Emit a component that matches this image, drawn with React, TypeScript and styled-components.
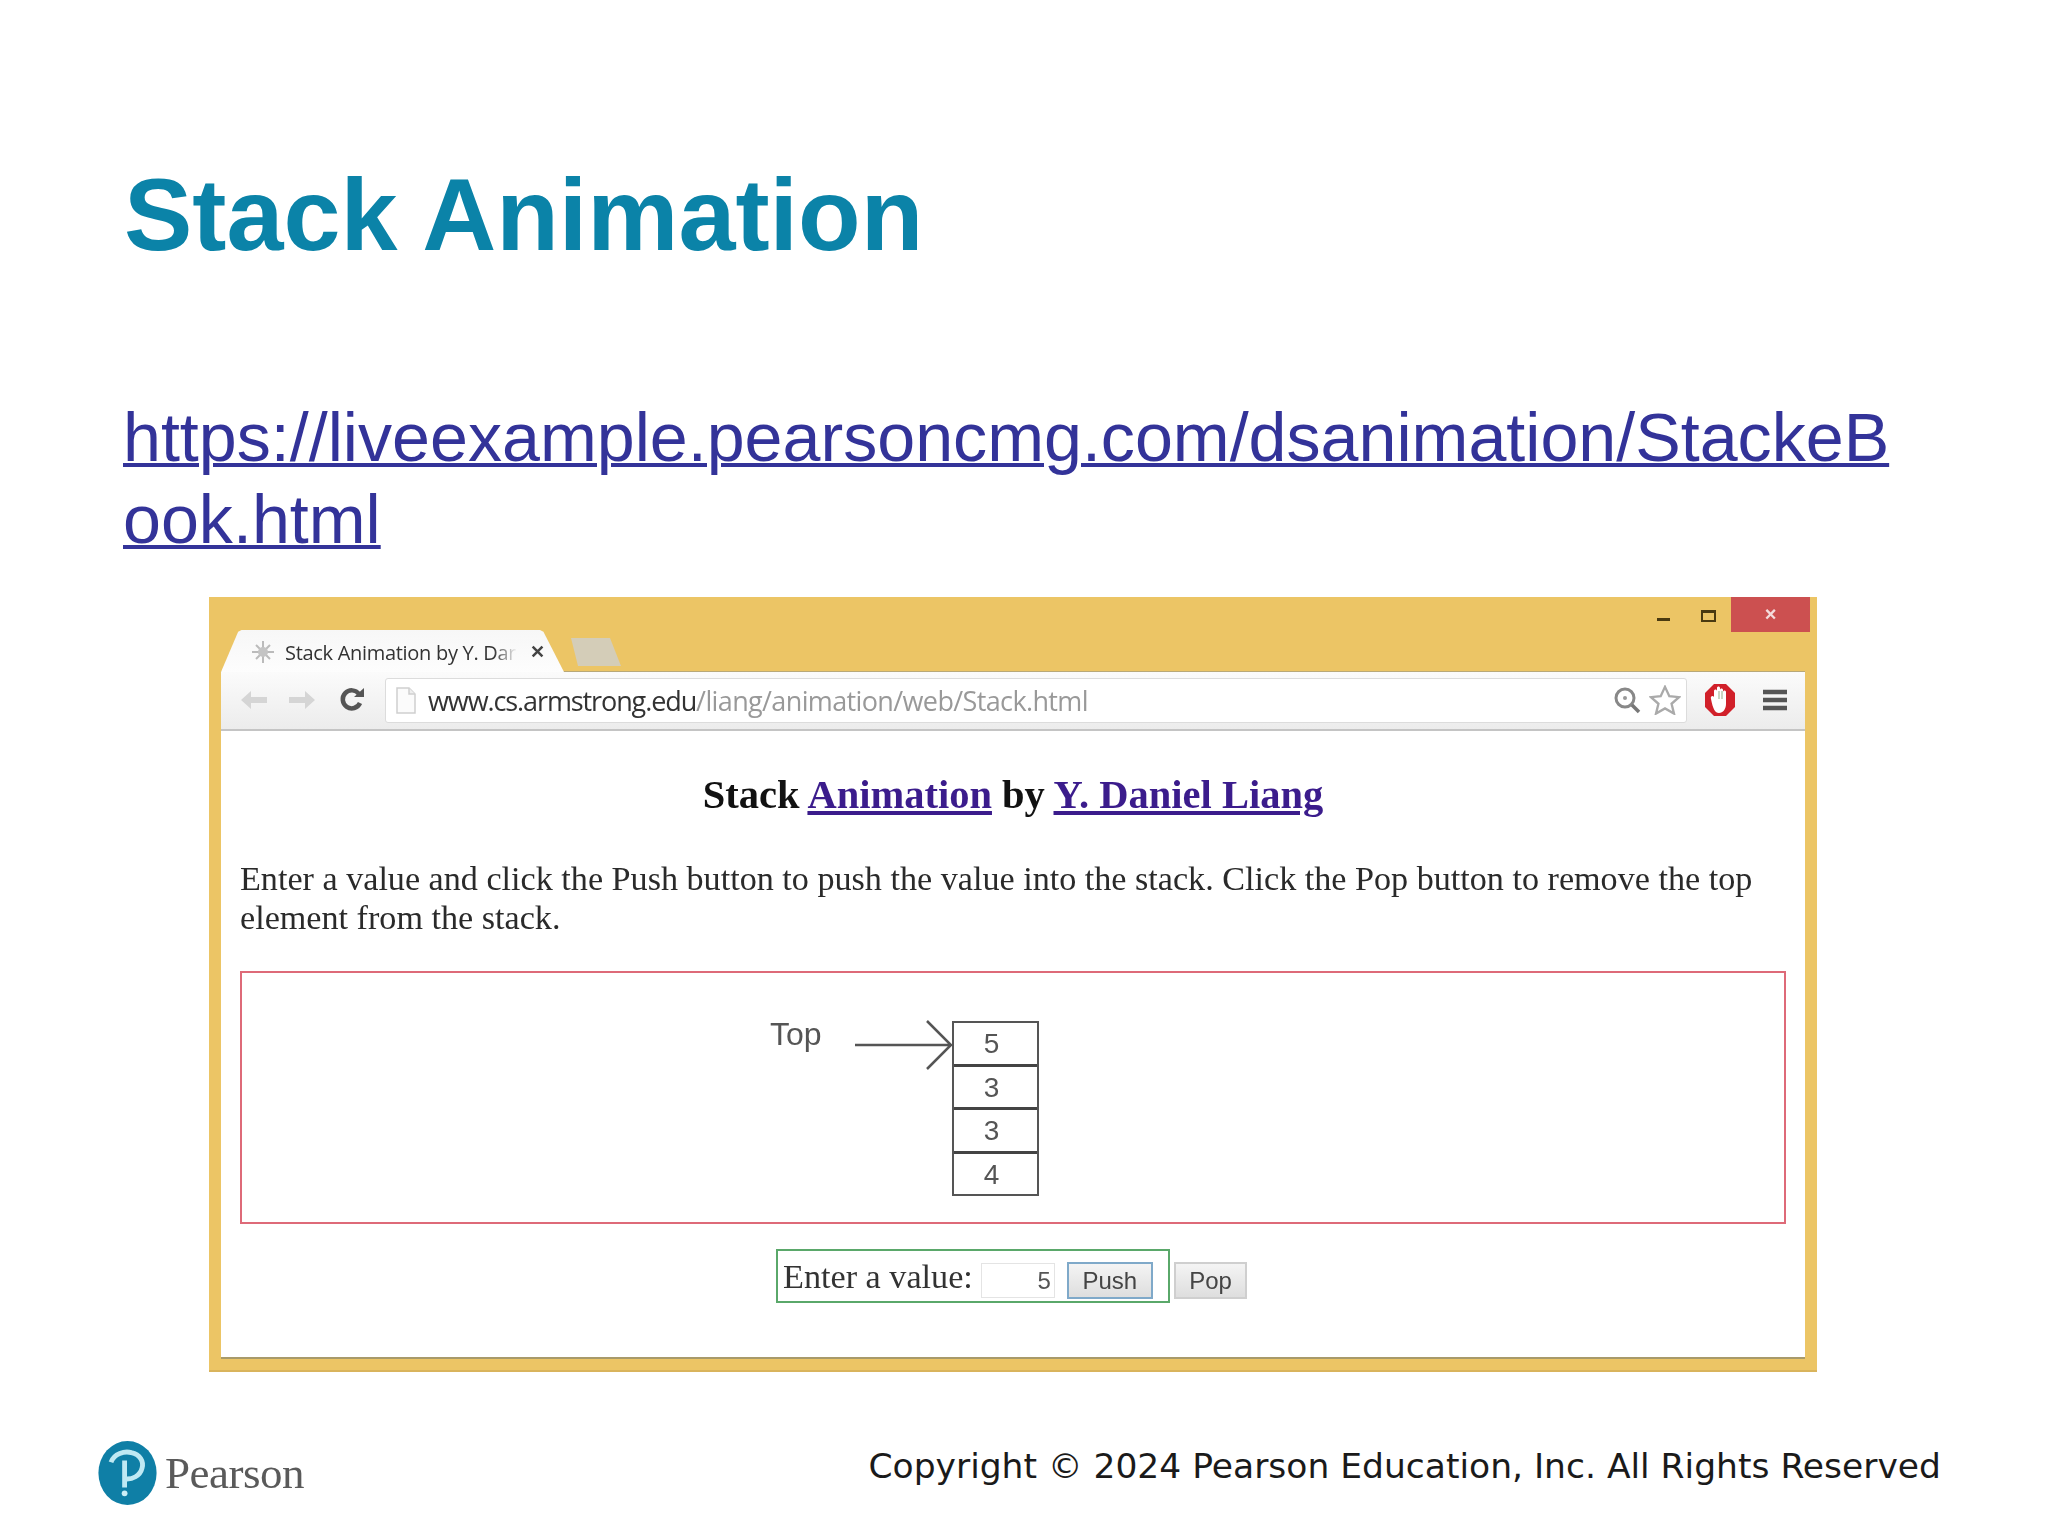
import * as React from 'react';
import styled, { createGlobalStyle } from 'styled-components';

const GlobalStyle = createGlobalStyle`
  html, body {
    margin: 0;
    padding: 0;
    background: #fff;
  }
`;

const Slide = styled.div`
  width: 2048px;
  height: 1536px;
  box-sizing: border-box;
  padding: 157px 0 0;
  background: #fff;
  display: flex;
  flex-direction: column;
  overflow: hidden;
`;

const Title = styled.h1`
  margin: 0 0 0 124px;
  font: bold 102.5px/115px 'Liberation Sans', Arial, sans-serif;
  color: #0b83a8;
  filter: blur(0.4px);
`;

const Link = styled.a`
  display: block;
  margin: 124px 0 0 123px;
  width: 1780px;
  font: 68.2px/82px 'Liberation Sans', Arial, sans-serif;
  color: #333399;
  text-decoration: underline;
  text-decoration-thickness: 4px;
  word-break: break-all;
  filter: blur(0.4px);
`;

const Shot = styled.div`
  margin: 37px 0 0 209px;
  width: 1608px;
  height: 775px;
  box-sizing: border-box;
  padding: 0 12px 13px;
  background: #ecc565;
  display: flex;
  flex-direction: column;
  filter: blur(0.7px);
  box-shadow: inset 0 -2px 0 #d9b45c;
`;

const Caption = styled.div`
  height: 33px;
  flex: none;
  display: flex;
  align-items: flex-start;
  justify-content: flex-end;
`;

const MinButton = styled.div`
  width: 13px;
  height: 3px;
  margin: 21px 31px 0 0;
  background: #4a3a10;
`;

const MaxButton = styled.div`
  width: 11px;
  height: 7px;
  margin: 13px 15px 0 0;
  border: 2px solid #4a3a10;
  border-top-width: 3px;
  box-sizing: content-box;
`;

const CloseButton = styled.div`
  width: 79px;
  height: 35px;
  margin-right: -5px;
  background: #cc5050;
  color: #f4dcdc;
  font: bold 20px/35px 'Liberation Sans', sans-serif;
  text-align: center;
`;

const TabStrip = styled.div`
  height: 41px;
  flex: none;
  display: flex;
  align-items: flex-end;
  gap: 7px;
`;

const Tab = styled.div`
  width: 343px;
  height: 42px;
  flex: none;
  margin-bottom: -1px;
  position: relative;
  box-sizing: border-box;
  padding: 2px 0 0 30px;
  background: linear-gradient(#f7f7f7, #fdfdfd);
  clip-path: polygon(0 100%, 5% 4%, 6% 0, 93% 0, 94% 4%, 100% 100%);
  display: flex;
  align-items: center;
  font: 20px 'Open Sans', 'Liberation Sans', sans-serif;
  letter-spacing: -0.3px;
  color: #333;
`;

const TabTitle = styled.span`
  width: 232px;
  margin-left: 10px;
  white-space: nowrap;
  -webkit-mask-image: linear-gradient(90deg, #000 90%, transparent);
  mask-image: linear-gradient(90deg, #000 90%, transparent);
`;

const TabClose = styled.span`
  margin-left: 13px;
  font: bold 18px 'Liberation Sans', sans-serif;
  color: #444;
`;

const NewTab = styled.div`
  width: 50px;
  height: 28px;
  margin-bottom: 5px;
  background: #d4cdb8;
  clip-path: polygon(14% 100%, 0 0, 78% 0, 100% 100%);
`;

const Toolbar = styled.div`
  height: 60px;
  flex: none;
  box-sizing: border-box;
  padding: 5px 10px 6px 18px;
  background: linear-gradient(#fbfbfb, #ececec);
  border-top: 1px solid #b8a878;
  border-bottom: 2px solid #c4c4c4;
  display: flex;
  align-items: center;
`;

const NavIcons = styled.div`
  width: 146px;
  flex: none;
  display: flex;
  align-items: center;
  gap: 18px;

  svg:last-child {
    margin-left: 3px;
  }
`;

const AddressBar = styled.div`
  flex: 1;
  height: 45px;
  box-sizing: border-box;
  padding: 0 5px 0 10px;
  background: #fff;
  border: 1px solid #dcdcdc;
  border-radius: 3px;
  display: flex;
  align-items: center;
  font: 27px 'Open Sans', 'Liberation Sans', sans-serif;
  letter-spacing: -0.63px;
  color: #999;
`;

const Host = styled.span`
  color: #333;
  margin-left: 12px;
  letter-spacing: -1.1px;
`;

const AddressIcons = styled.div`
  margin-left: auto;
  display: flex;
  align-items: center;
  gap: 7px;
`;

const ToolIcons = styled.div`
  width: 108px;
  flex: none;
  box-sizing: border-box;
  padding-left: 17px;
  display: flex;
  align-items: center;
  gap: 26px;
`;

const Page = styled.div`
  flex: 1;
  box-sizing: border-box;
  padding: 42px 19px 0;
  background: #fff;
  border-bottom: 2px solid #a89a6a;
  display: flex;
  flex-direction: column;
  font-family: 'Liberation Serif', 'Times New Roman', serif;
`;

const PageHeading = styled.h3`
  margin: 0;
  font: bold 40.5px/44px 'Liberation Serif', 'Times New Roman', serif;
  color: #111;
  text-align: center;
`;

const PageLink = styled.span`
  color: #3b1c8c;
  text-decoration: underline;
`;

const Blurb = styled.p`
  margin: 42px 0 0;
  width: 1540px;
  font-size: 34.15px;
  line-height: 39px;
  color: #2a2a2a;
`;

const AnimationPane = styled.div`
  margin-top: 34px;
  height: 253px;
  box-sizing: border-box;
  border: 2px solid #de6a78;
  padding: 48px 0 0 528px;
  display: flex;
  align-items: flex-start;
`;

const TopLabel = styled.div`
  width: 84px;
  margin-top: -5px;
  font: 32px 'Liberation Sans', Arial, sans-serif;
  color: #555;
`;

const TopArrow = styled.svg`
  flex: none;
  margin-top: -1px;
`;

const StackColumn = styled.div`
  width: 87px;
  box-sizing: border-box;
  border: 2.5px solid #555;
  display: flex;
  flex-direction: column;
`;

const StackCell = styled.div<{ $first?: boolean }>`
  height: 40.5px;
  border-top: ${p => (p.$first ? 'none' : '3px solid #444')};
  font: 28px/41px 'Liberation Sans', Arial, sans-serif;
  color: #555;
  text-align: center;
  padding-right: 8px;
`;

const Controls = styled.div`
  margin: 25px 0 0 536px;
  display: flex;
  align-items: center;
`;

const Fieldset = styled.div`
  width: 394px;
  height: 54px;
  box-sizing: border-box;
  border: 2px solid #5aa86a;
  padding: 2px 0 0 5px;
  display: flex;
  align-items: center;
  font-size: 34.2px;
  color: #333;
  white-space: nowrap;
`;

const ValueInput = styled.div`
  width: 74px;
  height: 35px;
  margin: 6px 0 0 8px;
  box-sizing: border-box;
  border: 1px solid #e4e4e4;
  padding-right: 3px;
  font: 24px/33px 'Liberation Sans', Arial, sans-serif;
  color: #555;
  text-align: right;
`;

const FormButton = styled.div<{ $width: number; $focused?: boolean; $gap: number; $drop: number }>`
  width: ${p => p.$width}px;
  height: 37px;
  flex: none;
  margin: ${p => p.$drop}px 0 0 ${p => p.$gap}px;
  box-sizing: border-box;
  border: 2px solid ${p => (p.$focused ? '#7fa9c9' : '#cfcfcf')};
  background: linear-gradient(#f4f4f4, #dedede);
  font: 24px/33px 'Liberation Sans', Arial, sans-serif;
  color: #444;
  text-align: center;
`;

const Footer = styled.div`
  margin-top: 69px;
  padding: 0 107px 0 98px;
  display: flex;
  align-items: center;
  justify-content: space-between;
`;

const Brand = styled.div`
  display: flex;
  align-items: center;
  gap: 8px;
  font: 45px 'Liberation Serif', 'Times New Roman', serif;
  letter-spacing: -0.5px;
  color: #5a5a5a;
  filter: blur(0.6px);
`;

const Copyright = styled.div`
  margin-top: -15px;
  font: 34.5px 'DejaVu Sans', Verdana, sans-serif;
  color: #1a1a1a;
`;

const FlippedSvg = styled.svg<{ $flip?: boolean }>`
  transform: ${p => (p.$flip ? 'scaleX(-1)' : 'none')};
`;

const BackArrow = ({ flip }: { flip?: boolean }) => (
  <FlippedSvg width="30" height="24" viewBox="0 0 30 24" $flip={flip}>
    <path d="M2 12 12 3v6h16v6H12v6z" fill="#d5d5d5" />
  </FlippedSvg>
);

const Reload = () => (
  <svg width="28" height="28" viewBox="0 0 28 28">
    <path d="M22 17a9 9 0 1 1-1-9" fill="none" stroke="#555" strokeWidth="4.5" />
    <path d="M16 11h10V2z" fill="#555" />
  </svg>
);

const PageIcon = () => (
  <svg width="20" height="27" viewBox="0 0 20 27">
    <path d="M1 1h12l6 6v19H1z" fill="#fbfbfb" stroke="#cfcfcf" strokeWidth="1.5" />
    <path d="M13 1v6h6" fill="#eee" stroke="#cfcfcf" strokeWidth="1.5" />
  </svg>
);

const Zoom = () => (
  <svg width="30" height="30" viewBox="0 0 30 30">
    <circle cx="13" cy="13" r="9" fill="none" stroke="#888" strokeWidth="3" />
    <circle cx="13" cy="13" r="2" fill="#999" />
    <path d="m20 20 7 7" stroke="#777" strokeWidth="3.5" />
  </svg>
);

const Star = () => (
  <svg width="32" height="30" viewBox="0 0 34 32">
    <path d="m17 2 4.6 10 10.4 1-8 7 2.6 10.500L17 25l-9.600 5.500L10 20l-8-7 10.400-1z" fill="#fff" stroke="#aaa" strokeWidth="2.5" />
  </svg>
);

const BlockerIcon = () => (
  <svg width="32" height="34" viewBox="0 0 32 34">
    <path d="M10 1h12l9 9v14l-9 9H10l-9-9V10z" fill="#d1202a" />
    <path d="M7 16c-1-3 2-4 3-2V8c0-2 3-2 3 0V5c0-2 3-2 3 0v2c0-2 3-2 3 0v2c0-2 3-2 3 0v12c0 5-3 9-7 9s-6-4-8-14z" fill="#fff" />
    <path d="M15 8v8M18 8v8" stroke="#b9c9b0" strokeWidth="1.500" />
  </svg>
);

const Menu = () => (
  <svg width="26" height="24" viewBox="0 0 26 24">
    <path d="M1 4h24M1 12h24M1 20h24" stroke="#555" strokeWidth="4.500" />
  </svg>
);

const FaviconSvg = styled.svg`
  flex: none;
`;

const Favicon = () => (
  <FaviconSvg width="24" height="24" viewBox="0 0 24 24">
    <path d="M12 1v22M1 12h22M5 5l14 14M19 5 5 19" stroke="#bbb" strokeWidth="2" />
    <circle cx="12" cy="12" r="5" fill="#c4c4c4" />
  </FaviconSvg>
);

const PearsonMark = () => (
  <svg width="59" height="64" viewBox="0 0 60 66">
    <ellipse cx="30" cy="33" rx="30" ry="33" fill="#0f7fa6" />
    <path d="M13 22c3-9 14-12 21-10 9 2 13 9 11 16-2 8-10 12-18 11M27 20v28" fill="none" stroke="#bfe9f3" strokeWidth="5" />
    <circle cx="27" cy="54" r="3" fill="#cdeef6" />
  </svg>
);

const App: React.FC = () => {
  return (
    <Slide>
      <GlobalStyle />
      <Title>Stack Animation</Title>
      <Link>https://liveexample.pearsoncmg.com/dsanimation/StackeBook.html</Link>
      <Shot>
        <Caption>
          <MinButton />
          <MaxButton />
          <CloseButton>×</CloseButton>
        </Caption>
        <TabStrip>
          <Tab>
            <Favicon />
            <TabTitle>Stack Animation by Y. Dar</TabTitle>
            <TabClose>✕</TabClose>
          </Tab>
          <NewTab />
        </TabStrip>
        <Toolbar>
          <NavIcons>
            <BackArrow />
            <BackArrow flip />
            <Reload />
          </NavIcons>
          <AddressBar>
            <PageIcon />
            <Host>www.cs.armstrong.edu</Host>/liang/animation/web/Stack.html
            <AddressIcons>
              <Zoom />
              <Star />
            </AddressIcons>
          </AddressBar>
          <ToolIcons>
            <BlockerIcon />
            <Menu />
          </ToolIcons>
        </Toolbar>
        <Page>
          <PageHeading>
            Stack <PageLink>Animation</PageLink> by <PageLink>Y. Daniel Liang</PageLink>
          </PageHeading>
          <Blurb>
            Enter a value and click the Push button to push the value into the stack. Click the Pop button to remove the top element from the stack.
          </Blurb>
          <AnimationPane>
            <TopLabel>Top</TopLabel>
            <TopArrow width="98" height="50" viewBox="0 0 98 50">
              <path d="M1 25h96M73 1l24 24-24 24" fill="none" stroke="#555" strokeWidth="2.500" />
            </TopArrow>
            <StackColumn>
              {['5', '3', '3', '4'].map((v, i) => (
                <StackCell key={i} $first={i === 0}>
                  {v}
                </StackCell>
              ))}
            </StackColumn>
          </AnimationPane>
          <Controls>
            <Fieldset>
              Enter a value:
              <ValueInput>5</ValueInput>
              <FormButton $width={86} $gap={12} $drop={6} $focused>
                Push
              </FormButton>
            </Fieldset>
            <FormButton $width={73} $gap={4} $drop={8}>
              Pop
            </FormButton>
          </Controls>
        </Page>
      </Shot>
      <Footer>
        <Brand>
          <PearsonMark />
          Pearson
        </Brand>
        <Copyright>Copyright © 2024 Pearson Education, Inc. All Rights Reserved</Copyright>
      </Footer>
    </Slide>
  );
};

export default App;
